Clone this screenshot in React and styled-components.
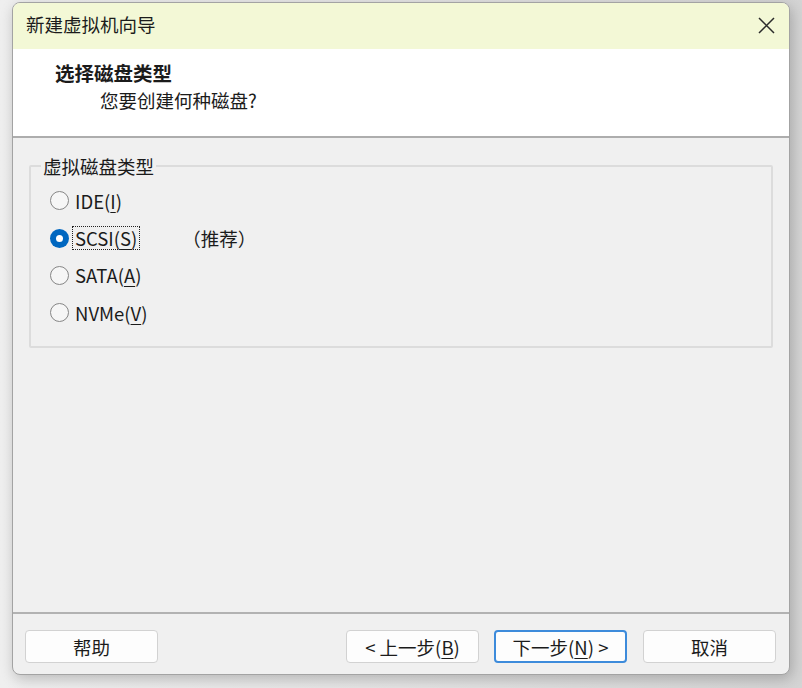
import React from "react";
import styled, { createGlobalStyle } from "styled-components";

const Global = createGlobalStyle`
  html, body { margin: 0; padding: 0; }
  body {
    width: 802px;
    height: 688px;
    overflow: hidden;
    background: linear-gradient(90deg, #efefef 0px, #e4e4e4 400px, #d4d4d4 802px);
    font-family: "Noto Sans CJK SC", "Noto Sans", sans-serif;
    color: #1b1b1b;
  }
  #root { padding: 2px 0 0 12px; }
`;

const Dialog = styled.div`
  box-sizing: border-box;
  width: 778px;
  height: 673px;
  border: 1px solid #a3a3a3;
  border-radius: 8px;
  overflow: hidden;
  background: #f0f0f0;
  display: flex;
  flex-direction: column;
  box-shadow: 2px 4px 14px rgba(0, 0, 0, 0.22);
  font-size: 18.5px;
`;

const TitleBar = styled.div`
  height: 46px;
  flex: none;
  background: #f3f8d6;
  display: flex;
  align-items: center;
  justify-content: space-between;
  padding: 0 14px 5px 13px;
  box-sizing: border-box;
`;

const TitleText = styled.span`
  font-size: 18.5px;
  line-height: 24px;
  color: #1c1c1c;
`;

const CloseButton = styled.div`
  width: 20px;
  height: 20px;
  display: flex;
  align-items: center;
  justify-content: center;
  margin-top: 3px;
  margin-right: -1px;
`;

const Header = styled.div`
  flex: none;
  height: 89px;
  box-sizing: border-box;
  background: #ffffff;
  padding: 12px 0 0 42px;
  border-bottom: 2px solid #adadad;
`;

const HeaderTitle = styled.div`
  font-weight: 700;
  font-size: 19.5px;
  line-height: 24px;
`;

const HeaderSub = styled.div`
  margin: 3px 0 0 45px;
  line-height: 24px;
`;

const Body = styled.div`
  flex: 1;
  padding: 16px 16px 0 16px;
  border-bottom: 2px solid #b2b2b2;
`;

const Group = styled.fieldset`
  margin: 0;
  padding: 4px 10px 14px 10px;
  border: 2px solid #dcdcdc;
  border-radius: 2px;
`;

const Legend = styled.legend`
  padding: 0 2px;
  line-height: 24px;
`;

const Row = styled.div`
  height: 37.4px;
  display: flex;
  align-items: center;
  padding-left: 9px;
`;

const Radio = styled.span`
  box-sizing: border-box;
  width: 19px;
  height: 19px;
  border-radius: 50%;
  flex: none;
  border: ${(p) => (p.$checked ? "none" : "1.5px solid #868686")};
  background: ${(p) => (p.$checked ? "#0067c0" : "#f6f6f6")};
  display: flex;
  align-items: center;
  justify-content: center;
  &::after {
    content: "";
    display: ${(p) => (p.$checked ? "block" : "none")};
    width: 7px;
    height: 7px;
    border-radius: 50%;
    background: #ffffff;
  }
`;

const Label = styled.span`
  margin-left: 3px;
  padding: 0 2px;
  line-height: 22px;
  border: 1px dotted ${(p) => (p.$focused ? "#222" : "transparent")};
`;

const Note = styled.span`
  margin-left: 42px;
`;

const Footer = styled.div`
  flex: none;
  height: 60px;
  box-sizing: border-box;
  display: flex;
  align-items: flex-start;
  padding: 16px 13px 0 12px;
`;

const Spacer = styled.div`
  flex: 1;
`;

const Button = styled.div`
  box-sizing: border-box;
  width: 133px;
  height: 33px;
  margin-left: ${(p) => p.$gap || 0}px;
  border-radius: 4px;
  background: #fdfdfd;
  border: ${(p) => (p.$default ? "2px solid #3d8bdb" : "1px solid #d2d2d2")};
  display: flex;
  align-items: center;
  justify-content: center;
  font-size: 18.5px;
  line-height: 24px;
  color: #1b1b1b;
`;

const U = styled.span`
  text-decoration: underline;
  text-underline-offset: 3px;
  text-decoration-thickness: 1px;
`;

const options = [
  { key: "IDE", m: "I" },
  { key: "SCSI", m: "S", checked: true },
  { key: "SATA", m: "A" },
  { key: "NVMe", m: "V" },
];

export default function App() {
  return (
    <>
      <Global />
      <Dialog>
        <TitleBar>
          <TitleText>新建虚拟机向导</TitleText>
          <CloseButton>
            <svg width="17" height="17" viewBox="0 0 17 17">
              <path d="M1 1 L16 16 M16 1 L1 16" stroke="#2b2b2b" strokeWidth="1.5" fill="none" />
            </svg>
          </CloseButton>
        </TitleBar>
        <Header>
          <HeaderTitle>选择磁盘类型</HeaderTitle>
          <HeaderSub>您要创建何种磁盘?</HeaderSub>
        </Header>
        <Body>
          <Group>
            <Legend>虚拟磁盘类型</Legend>
            {options.map((o) => (
              <Row key={o.key}>
                <Radio $checked={o.checked} />
                <Label $focused={o.checked}>
                  {o.key}(<U>{o.m}</U>)
                </Label>
                {o.checked && <Note>（推荐）</Note>}
              </Row>
            ))}
          </Group>
        </Body>
        <Footer>
          <Button>帮助</Button>
          <Spacer />
          <Button>
            &lt; 上一步(<U>B</U>)
          </Button>
          <Button $gap={15} $default>
            下一步(<U>N</U>) &gt;
          </Button>
          <Button $gap={16}>取消</Button>
        </Footer>
      </Dialog>
    </>
  );
}
